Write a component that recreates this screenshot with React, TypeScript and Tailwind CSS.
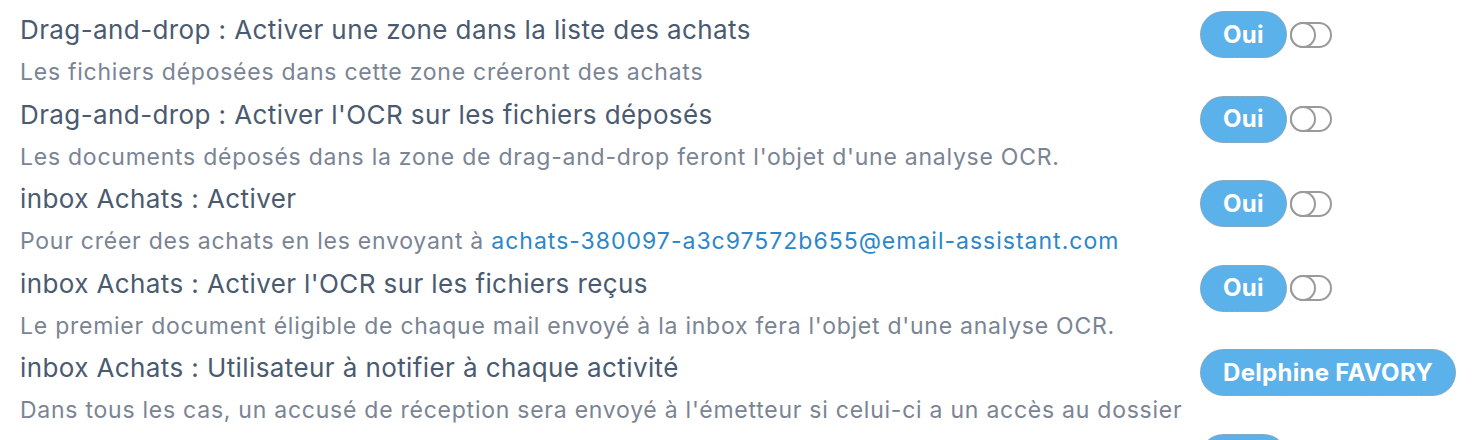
import { ReactNode } from "react";

interface Setting {
  title: string;
  description: ReactNode;
  value: string;
  toggle: boolean;
}

const settings: Setting[] = [
  {
    title: "Drag-and-drop : Activer une zone dans la liste des achats",
    description: "Les fichiers déposées dans cette zone créeront des achats",
    value: "Oui",
    toggle: true,
  },
  {
    title: "Drag-and-drop : Activer l'OCR sur les fichiers déposés",
    description:
      "Les documents déposés dans la zone de drag-and-drop feront l'objet d'une analyse OCR.",
    value: "Oui",
    toggle: true,
  },
  {
    title: "inbox Achats : Activer",
    description: (
      <>
        Pour créer des achats en les envoyant à{" "}
        <a href="#" className="tracking-[1px] text-[#2b87c9]">
          achats-380097-a3c97572b655@email-assistant.com
        </a>
      </>
    ),
    value: "Oui",
    toggle: true,
  },
  {
    title: "inbox Achats : Activer l'OCR sur les fichiers reçus",
    description:
      "Le premier document éligible de chaque mail envoyé à la inbox fera l'objet d'une analyse OCR.",
    value: "Oui",
    toggle: true,
  },
  {
    title: "inbox Achats : Utilisateur à notifier à chaque activité",
    description:
      "Dans tous les cas, un accusé de réception sera envoyé à l'émetteur si celui-ci a un accès au dossier",
    value: "Delphine FAVORY",
    toggle: false,
  },
  {
    title: "inbox Achats : Transférer les mails reçus",
    description: "Les mails reçus seront transférés à l'utilisateur notifié",
    value: "Oui",
    toggle: true,
  },
];

function Toggle() {
  return (
    <svg width="42" height="26" viewBox="0 0 42 26" className="shrink-0">
      <rect x="1" y="1" width="40" height="24" rx="12" fill="none" stroke="#9a9a9a" strokeWidth="2" />
      <circle cx="13" cy="13" r="12" fill="#fff" stroke="#9a9a9a" strokeWidth="2" />
    </svg>
  );
}

export default function App() {
  return (
    <div
      className="h-[440px] overflow-hidden bg-white pt-[9px] pl-5"
      style={{ fontFamily: "Inter, 'Noto Sans', sans-serif" }}
    >
      {settings.map((s, i) => (
        <div key={i} className="flex h-[84.5px]">
          <div className="flex w-[1180px] flex-col">
            <div className="text-[26px] leading-[42px] tracking-[0.4px] text-[#4a5a70]">{s.title}</div>
            <div className="text-[23px] leading-[42px] tracking-[0.75px] text-[#7a8494]">{s.description}</div>
          </div>
          <div className="flex items-center gap-[3px] self-start pt-[2px]">
            <button className="h-[47px] rounded-full border border-dashed border-[#a3a3a3] bg-[#5bb1e9] px-[22px] text-[24px] font-bold tracking-[0.3px] text-white">
              {s.value}
            </button>
            {s.toggle && <Toggle />}
          </div>
        </div>
      ))}
    </div>
  );
}
